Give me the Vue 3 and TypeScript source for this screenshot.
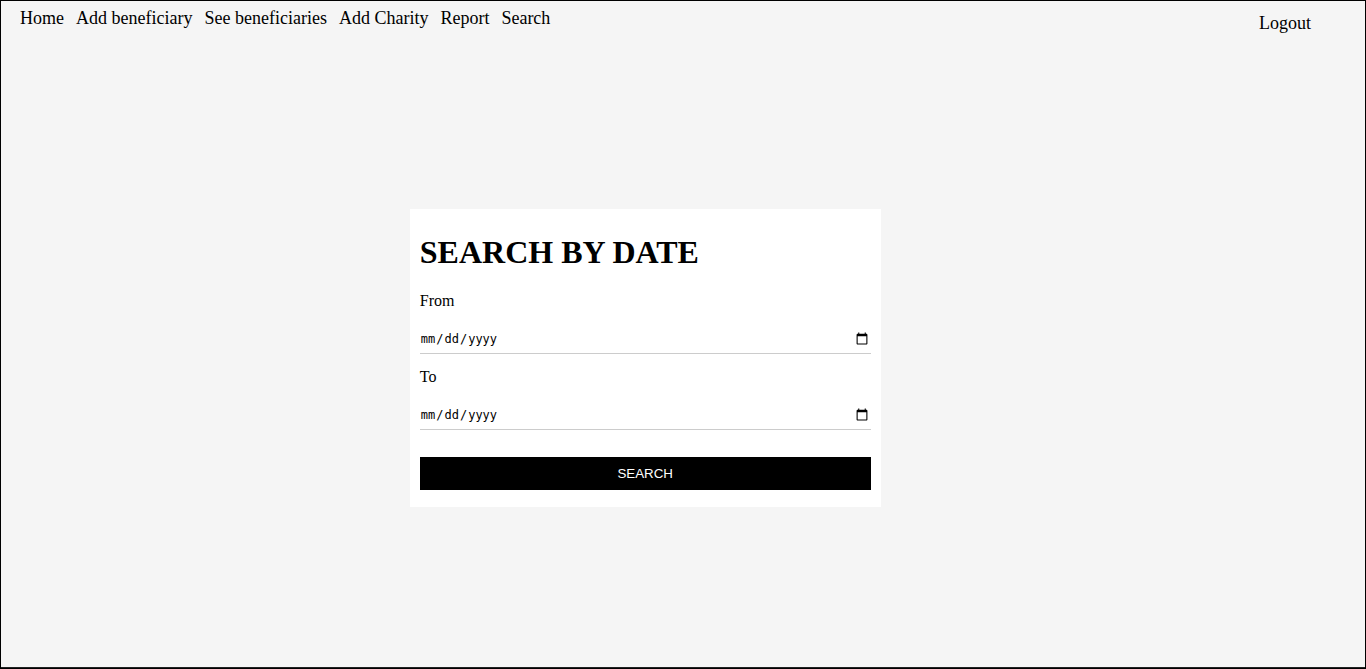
<script setup lang="ts">
import { ref } from 'vue'

interface NavLink {
  label: string
  href: string
}

const links: NavLink[] = [
  { label: 'Home', href: '#home' },
  { label: 'Add beneficiary', href: '#add-beneficiary' },
  { label: 'See beneficiaries', href: '#beneficiaries' },
  { label: 'Add Charity', href: '#add-charity' },
  { label: 'Report', href: '#report' },
  { label: 'Search', href: '#search' },
]

const from = ref<string>('')
const to = ref<string>('')
</script>

<template>
  <div class="page">
    <header class="bar">
      <nav class="links">
        <a v-for="link in links" :key="link.href" :href="link.href">{{ link.label }}</a>
      </nav>
      <a class="logout" href="#logout">Logout</a>
    </header>
    <main class="content">
      <form class="card" @submit.prevent>
        <h1>SEARCH BY DATE</h1>
        <label for="from">From</label>
        <input id="from" v-model="from" type="date" />
        <label for="to">To</label>
        <input id="to" v-model="to" type="date" />
        <button type="submit">SEARCH</button>
      </form>
    </main>
  </div>
</template>

<style>
body {
  margin: 0;
  background: #f5f5f5;
}
</style>

<style scoped>
.page {
  box-sizing: border-box;
  min-height: 100vh;
  border-bottom: 2px solid #222;
  outline: 1px solid #000;
  outline-offset: -1px;
  background: #f5f5f5;
  color: #000;
  font-family: "Liberation Serif", "Times New Roman", serif;
  font-size: 16px;
}
.bar {
  display: flex;
  justify-content: space-between;
  align-items: flex-start;
  padding: 8px 55px 0 20px;
  font-size: 18px;
  line-height: 20px;
}
.links {
  display: flex;
  gap: 12px;
}
a {
  color: #000;
  text-decoration: none;
}
.logout {
  margin-top: 5px;
}
.content {
  padding-top: 176px;
}
.card {
  box-sizing: content-box;
  display: flex;
  flex-direction: column;
  width: 33%;
  margin-left: 30%;
  padding: 24px 10px 17px;
  background: #fff;
}
h1 {
  margin: 0 0 21px;
  font-size: 32px;
  line-height: 38px;
  font-weight: bold;
}
label {
  line-height: 18px;
}
input {
  box-sizing: border-box;
  height: 34px;
  margin: 10px 0 14px;
  padding: 4px 0 0;
  border: 0;
  border-bottom: 1px solid #ccc;
  background: #fff;
  color: #000;
  font-family: "DejaVu Sans Mono", monospace;
  font-size: 12px;
}
input::-webkit-calendar-picker-indicator {
  font-size: 14px;
}
button {
  height: 33px;
  margin-top: 13px;
  padding: 0;
  border: 0;
  background: #000;
  color: #fff;
  font-family: "Liberation Sans", Arial, sans-serif;
}
</style>
